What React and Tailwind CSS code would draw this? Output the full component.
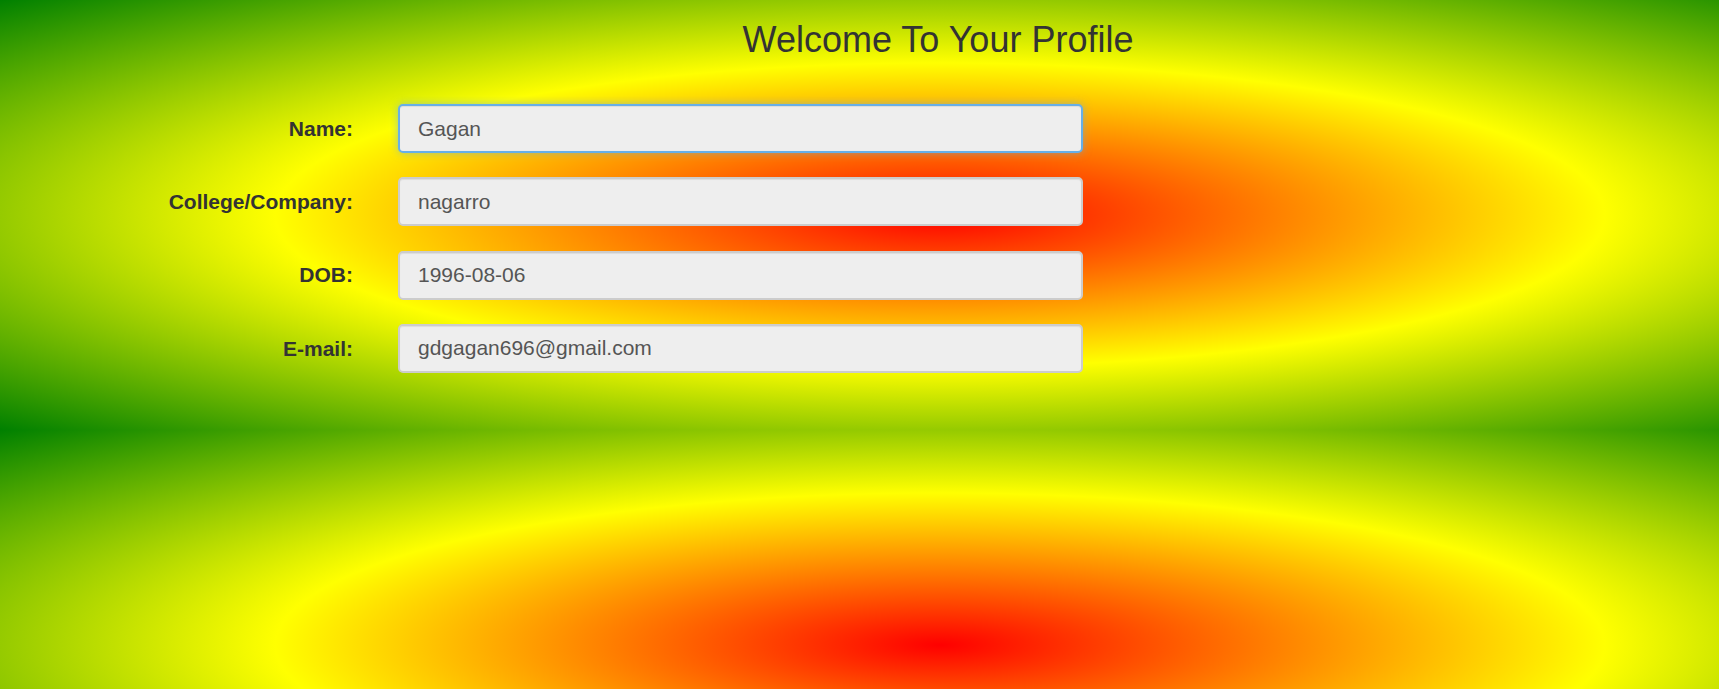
const fields = [
  { label: 'Name:', value: 'Gagan', focused: true },
  { label: 'College/Company:', value: 'nagarro' },
  { label: 'DOB:', value: '1996-08-06' },
  { label: 'E-mail:', value: 'gdgagan696@gmail.com' },
]

function Field({ label, value, focused }) {
  return (
    <div className="flex items-center">
      <label className="w-[353px] text-right text-[21px] font-bold text-[#333]">{label}</label>
      <input
        readOnly
        defaultValue={value}
        className={
          focused
            ? 'ml-[45px] w-[685px] h-[49px] px-[18px] text-[21px] text-[#555] bg-[#eeeeee] rounded-[5px] border-2 border-[#66afe9] outline-none shadow-[inset_0_1px_1px_rgba(0,0,0,0.075),0_0_8px_rgba(102,175,233,0.6)]'
            : 'ml-[45px] w-[685px] h-[49px] px-[18px] text-[21px] text-[#555] bg-[#eeeeee] rounded-[5px] border-2 border-[#cccccc] outline-none shadow-[inset_0_1px_1px_rgba(0,0,0,0.075)]'
        }
      />
    </div>
  )
}

export default function App() {
  return (
    <div className="w-full h-[689px] overflow-hidden" style={{ fontFamily: '"Liberation Sans", Arial, sans-serif' }}>
      <div className="w-[1880px] h-[689px] bg-[radial-gradient(red,yellow,green)] bg-size-[1880px_430px] bg-repeat">
        <h1 className="pt-[20px] pr-[4px] h-[60px] text-center text-[36px] leading-[1.1] font-normal text-[#333]">
          Welcome To Your Profile
        </h1>
        <form className="pt-[44px] flex flex-col gap-[24.3px]">
          {fields.map(f => (
            <Field key={f.label} {...f} />
          ))}
        </form>
      </div>
    </div>
  )
}
